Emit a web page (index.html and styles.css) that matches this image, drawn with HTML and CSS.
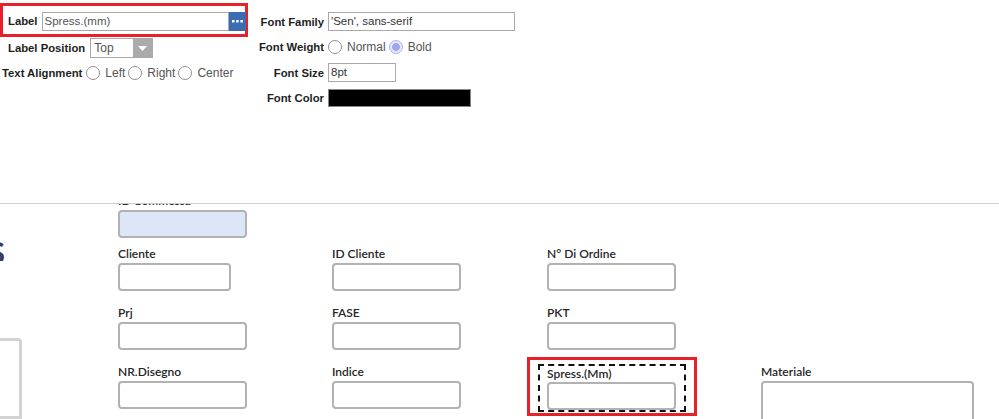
FILE: index.html
```html
<!DOCTYPE html>
<html>
<head>
<meta charset="utf-8">
<link rel="stylesheet" href="styles.css">
</head>
<body>
<div class="panel">
  <div class="props-left">
    <div class="label-row">
      <span class="plabel">Label</span>
      <div class="text-with-btn">
        <span class="tinput wide">Spress.(mm)</span>
        <span class="dots-btn"><svg width="17" height="19" viewBox="0 0 17 19"><rect x="3" y="8" width="2.5" height="2.5" fill="#fff"/><rect x="7.2" y="8" width="2.5" height="2.5" fill="#fff"/><rect x="11.4" y="8" width="2.5" height="2.5" fill="#fff"/></svg></span>
      </div>
    </div>
    <div class="row-pos">
      <span class="plabel">Label Position</span>
      <span class="select"><span class="sel-text">Top</span><span class="sel-arrow"><svg width="9" height="5" viewBox="0 0 9 5"><path d="M0 0h9L4.5 5z" fill="#fff"/></svg></span></span>
    </div>
    <div class="row-align">
      <span class="plabel">Text Alignment</span>
      <span class="radio"></span><span class="rtext">Left</span>
      <span class="radio"></span><span class="rtext">Right</span>
      <span class="radio"></span><span class="rtext">Center</span>
    </div>
  </div>
  <div class="props-right">
    <span class="plabel rl">Font Family</span>
    <span class="tinput family">'Sen', sans-serif</span>
    <span class="plabel rl">Font Weight</span>
    <span class="radios"><span class="radio"></span><span class="rtext">Normal</span><span class="radio checked"></span><span class="rtext">Bold</span></span>
    <span class="plabel rl">Font Size</span>
    <span class="tinput size">8pt</span>
    <span class="plabel rl">Font Color</span>
    <span class="color-box"></span>
  </div>
</div>
<div class="stage">
  <div class="left-strip">
    <div class="big-glyph"><span>S</span></div>
    <div class="side-box"></div>
  </div>
  <div class="fields">
    <div class="frow first">
      <div class="cell"><div class="flabel">ID Commessa</div><div class="finput blue"></div></div>
    </div>
    <div class="frow">
      <div class="cell"><div class="flabel">Cliente</div><div class="finput short"></div></div>
      <div class="cell"><div class="flabel">ID Cliente</div><div class="finput"></div></div>
      <div class="cell"><div class="flabel">N° Di Ordine</div><div class="finput"></div></div>
    </div>
    <div class="frow">
      <div class="cell"><div class="flabel">Prj</div><div class="finput"></div></div>
      <div class="cell"><div class="flabel">FASE</div><div class="finput"></div></div>
      <div class="cell"><div class="flabel">PKT</div><div class="finput"></div></div>
    </div>
    <div class="frow">
      <div class="cell"><div class="flabel">NR.Disegno</div><div class="finput"></div></div>
      <div class="cell"><div class="flabel">Indice</div><div class="finput"></div></div>
      <div class="cell selected"><div class="flabel">Spress.(Mm)</div><div class="finput"></div></div>
      <div class="cell"><div class="flabel">Materiale</div><div class="finput area"></div></div>
    </div>
  </div>
</div>
</body>
</html>
```
FILE: styles.css
```css
html, body {
  margin: 0;
  padding: 0;
  background: #fff;
  width: 999px;
  height: 419px;
  overflow: hidden;
}

.panel {
  height: 204px;
  box-sizing: border-box;
  border-bottom: 1px solid #cfcfcf;
  display: flex;
  font-family: "Liberation Sans", Arial, sans-serif;
  font-size: 11.5px;
  color: #555;
  position: relative;
  z-index: 2;
  background: #fff;
}

.plabel {
  font-weight: bold;
  color: #1e1e1e;
  font-size: 11.3px;
  white-space: nowrap;
}

.props-left {
  width: 248px;
  padding-top: 3px;
  display: flex;
  flex-direction: column;
}

.label-row {
  height: 34px;
  box-sizing: border-box;
  border: 3px solid #e8202a;
  display: flex;
  align-items: flex-start;
  padding: 6px 0 0 5px;
  gap: 4px;
}
.label-row .plabel {
  line-height: 19px;
}

.text-with-btn {
  display: flex;
  height: 19px;
}

.tinput {
  display: block;
  height: 19px;
  box-sizing: border-box;
  border: 1px solid #a9a9a9;
  line-height: 17px;
  padding-left: 2px;
  color: #555;
  background: #fff;
  white-space: nowrap;
  overflow: hidden;
}
.tinput.wide {
  width: 187px;
}
.dots-btn {
  display: block;
  width: 17px;
  height: 19px;
  background: #3b6db5;
}
.dots-btn svg {
  display: block;
}

.row-pos {
  display: flex;
  align-items: center;
  height: 20px;
  margin-top: 1px;
  padding-left: 8px;
  gap: 5px;
}

.select {
  display: flex;
  width: 63px;
  height: 20px;
  box-sizing: border-box;
  border: 1px solid #a9a9a9;
}
.sel-text {
  flex: 1;
  line-height: 18px;
  padding-left: 3px;
  color: #555;
  font-size: 12px;
}
.sel-arrow {
  width: 19px;
  background: #ababab;
  display: flex;
  align-items: center;
  justify-content: center;
}
.sel-arrow svg {
  display: block;
}

.row-align {
  display: flex;
  align-items: center;
  height: 20px;
  margin-top: 5px;
  padding-left: 2px;
}
.row-align .plabel {
  margin-right: 4px;
}

.radio {
  display: inline-block;
  width: 14px;
  height: 14px;
  box-sizing: border-box;
  border: 1px solid #949494;
  border-radius: 50%;
  background: #fff;
  margin-right: 5px;
  flex: none;
}
.radio.checked {
  border-color: #aab2ec;
  background: radial-gradient(circle, #9ea7ec 0, #9ea7ec 3.6px, #e4e7fb 4.2px);
}
.rtext {
  margin-right: 3px;
  color: #555;
  font-size: 12px;
}

.props-right {
  margin-left: 4px;
  padding-top: 12px;
  display: grid;
  grid-template-columns: 72px auto;
  grid-auto-rows: 19px;
  column-gap: 4px;
  row-gap: 6.5px;
  align-items: center;
  align-content: start;
}
.rl {
  text-align: right;
}
.radios {
  display: flex;
  align-items: center;
}
.tinput.family {
  width: 187px;
  color: #333;
}
.tinput.size {
  width: 68px;
  color: #333;
}
.color-box {
  display: block;
  width: 143px;
  height: 18px;
  box-sizing: border-box;
  border: 1px solid #888;
  background: #000;
}

/* lower form */
.stage {
  height: 215px;
  overflow: hidden;
  display: flex;
  font-family: "Lato", "Noto Sans", sans-serif;
}

.left-strip {
  width: 118px;
  flex: none;
  display: flex;
  flex-direction: column;
}
.big-glyph {
  width: 5px;
  height: 30px;
  margin-top: 33px;
  overflow: hidden;
  display: flex;
  justify-content: flex-end;
}
.big-glyph span {
  font-family: "Lato", sans-serif;
  font-weight: bold;
  font-size: 31px;
  line-height: 30px;
  color: #3a3c5e;
  flex: none;
}
.side-box {
  width: 30px;
  height: 100px;
  margin-left: -8px;
  margin-top: 77px;
  box-sizing: border-box;
  border: 3px solid #d3d3d3;
  border-top-right-radius: 4px;
}

.fields {
  margin-top: -11px;
  display: flex;
  flex-direction: column;
}

.frow {
  display: grid;
  grid-template-columns: 214px 215px 214px 240px;
  margin-bottom: 14px;
}
.frow.first {
  margin-bottom: 8px;
}

.cell {
  position: relative;
}

.flabel {
  height: 15px;
  line-height: 15px;
  font-size: 12px;
  font-weight: 600;
  color: #262626;
  margin-bottom: 2px;
  white-space: nowrap;
}

.finput {
  width: 129px;
  height: 28px;
  box-sizing: border-box;
  border: 2px solid #b2b2b2;
  border-radius: 4px;
  background: #fff;
}
.finput.blue {
  background: #dde6f6;
}
.finput.short {
  width: 113px;
}
.finput.area {
  width: 213px;
  height: 60px;
  margin-top: 1px;
}

.cell.selected .flabel {
  margin-top: 2px;
  margin-bottom: 1px;
}
.cell.selected::before {
  content: "";
  position: absolute;
  left: -9px;
  top: 0;
  width: 148px;
  height: 48px;
  box-sizing: border-box;
  border: 2px dashed #111;
}
.cell.selected::after {
  content: "";
  position: absolute;
  left: -20px;
  top: -7px;
  width: 170px;
  height: 59px;
  box-sizing: border-box;
  border: 3px solid #e8202a;
}
```
